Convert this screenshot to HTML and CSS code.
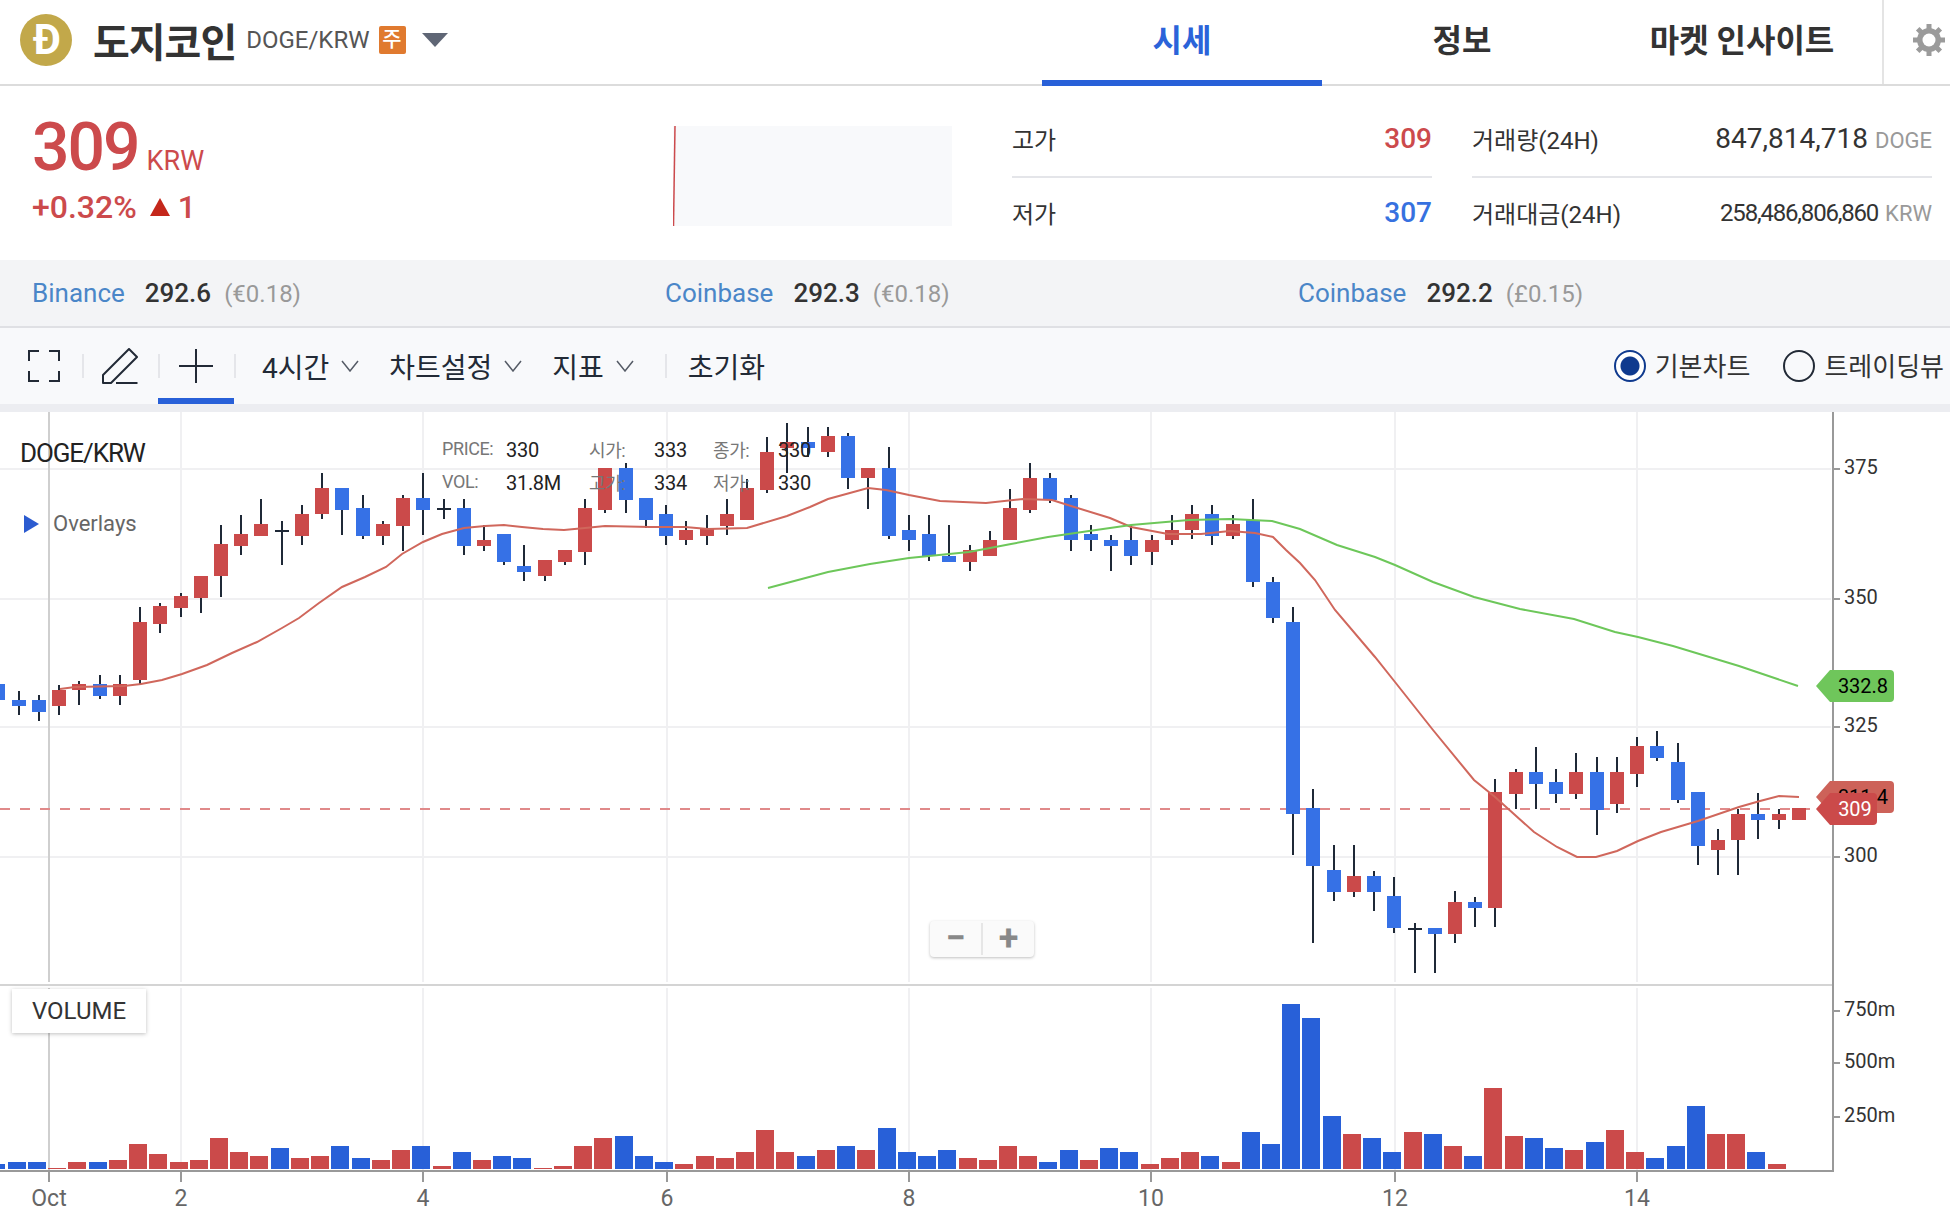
FILE: index.html
```html
<!DOCTYPE html>
<html lang="ko">
<head>
  <meta charset="UTF-8" />
  <title>도지코인 DOGE/KRW</title>
  <link rel="stylesheet" href="styles.css">
</head>
<body>

  <header class="top-bar">
    <div class="coin">
      <span class="coin-logo">Ð</span>
      <h1 class="coin-name">도지코인</h1>
      <span class="coin-pair">DOGE/KRW</span>
      <span class="coin-badge">주</span>
      <span class="coin-arrow"></span>
    </div>
    <nav class="tabs">
      <a class="tab active">시세</a>
      <a class="tab">정보</a>
      <a class="tab">마켓 인사이트</a>
    </nav>
    <div class="settings">
      <svg width="34" height="34" viewBox="0 0 34 34">
        <g stroke="#9b9b9b" stroke-width="5">
          <path d="M17 1V33M1 17H33M5.7 5.7L28.3 28.3M28.3 5.7L5.7 28.3"/>
        </g>
        <circle cx="17" cy="17" r="12" fill="#9b9b9b"/>
        <circle cx="17" cy="17" r="6.5" fill="#fff"/>
      </svg>
    </div>
  </header>

  <section class="summary">
    <div class="price-col">
      <div class="price-main"><span class="price-now">309</span><span class="price-unit">KRW</span></div>
      <div class="price-change">+0.32%<span class="up-arrow"></span>1</div>
    </div>
    <div class="spark">
      <svg width="279" height="100" viewBox="0 0 279 100"><path d="M0.5 100L2 0" stroke="#cc4a4c" stroke-width="1.5" fill="none"/></svg>
    </div>
    <div class="stats">
      <div class="stat divided"><span>고가</span><b class="red">309</b></div>
      <div class="stat divided"><span>거래량(24H)</span><em>847,814,718<small>DOGE</small></em></div>
      <div class="stat"><span>저가</span><b class="blue">307</b></div>
      <div class="stat"><span>거래대금(24H)</span><em class="tight">258,486,806,860<small>KRW</small></em></div>
    </div>
  </section>

  <section class="exchanges">
    <div class="exchange"><a>Binance</a><b>292.6</b><span>(€0.18)</span></div>
    <div class="exchange"><a>Coinbase</a><b>292.3</b><span>(€0.18)</span></div>
    <div class="exchange"><a>Coinbase</a><b>292.2</b><span>(£0.15)</span></div>
  </section>

  <section class="toolbar">
    <button class="tool tool-full">
      <svg width="32" height="32" viewBox="0 0 32 32" fill="none" stroke="#222a36" stroke-width="2"><path d="M1 11V1h10M21 1h10v10M31 21v10H21M11 31H1V21"/></svg>
    </button>
    <i class="sep"></i>
    <button class="tool tool-pen">
      <svg width="36" height="36" viewBox="0 0 36 36" fill="none" stroke="#222a36" stroke-width="2" stroke-linejoin="round"><path d="M1 35V27L27 1l8 8-26 26H1zM14 35H35.5"/></svg>
    </button>
    <i class="sep"></i>
    <button class="tool tool-cross active">
      <svg width="34" height="34" viewBox="0 0 34 34" fill="none" stroke="#222a36" stroke-width="2"><path d="M17 0V34M0 17H34"/></svg>
    </button>
    <i class="sep"></i>
    <a class="menu first">4시간<svg width="18" height="12" viewBox="0 0 18 12" fill="none" stroke="#555b66" stroke-width="1.5"><path d="M1 1l8 10 8-10"/></svg></a>
    <a class="menu">차트설정<svg width="18" height="12" viewBox="0 0 18 12" fill="none" stroke="#555b66" stroke-width="1.5"><path d="M1 1l8 10 8-10"/></svg></a>
    <a class="menu">지표<svg width="18" height="12" viewBox="0 0 18 12" fill="none" stroke="#555b66" stroke-width="1.5"><path d="M1 1l8 10 8-10"/></svg></a>
    <i class="sep sep-menu"></i>
    <a class="menu reset">초기화</a>
    <div class="chart-type">
      <label class="radio checked"><i></i><span>기본차트</span></label>
      <label class="radio"><i></i><span>트레이딩뷰</span></label>
    </div>
  </section>

  <section class="chart" id="chart">
    <div class="chart-title">DOGE/KRW</div>
    <div class="overlays"><i></i>Overlays</div>
    <div class="legend">
      <span>PRICE:</span><b>330</b><span>시가:</span><b>333</b><span>종가:</span><b>330</b>
      <span>VOL:</span><b>31.8M</b><span>고가:</span><b>334</b><span>저가:</span><b>330</b>
    </div>
    <div class="zoom-box"><a class="zoom-btn">−</a><a class="zoom-btn">+</a></div>
    <div class="volume-badge">VOLUME</div>
  </section>

  <script src="chart.js"></script>

</body>
</html>
```

FILE: styles.css
```css
* {
  box-sizing: border-box;
}

body {
  margin: 0;
  width: 1950px;
  height: 1224px;
  overflow: hidden;
  background: #fff;
  color: #222;
  font-family: Roboto, "Noto Sans CJK KR", sans-serif;
}

/* top bar */
.top-bar {
  display: flex;
  height: 86px;
  border-bottom: 2px solid #dcdcdc;
}

.coin {
  display: flex;
  align-items: center;
  padding: 0 0 4px 20px;
}

.coin-logo {
  width: 52px;
  height: 52px;
  padding-left: 2px;
  border-radius: 50%;
  background: #c2a84a;
  color: #fff;
  font-size: 42px;
  font-weight: 700;
  line-height: 52px;
  text-align: center;
}

.coin-name {
  margin: 0 0 0 21px;
  font-size: 40px;
  font-weight: 700;
  letter-spacing: -1px;
  color: #333;
}

.coin-pair {
  margin-left: 10px;
  font-size: 24px;
  color: #555;
}

.coin-badge {
  width: 27px;
  height: 28px;
  margin-left: 9px;
  border-radius: 2px;
  background: #e07a2f;
  color: #fff;
  font-size: 21px;
  font-weight: 500;
  line-height: 27px;
  text-align: center;
}

.coin-arrow {
  margin-left: 16px;
  border-left: 13px solid transparent;
  border-right: 13px solid transparent;
  border-top: 14px solid #5f6675;
}

.tabs {
  display: flex;
  margin-left: auto;
}

.tab {
  width: 280px;
  height: 86px;
  font-size: 32px;
  font-weight: 700;
  line-height: 82px;
  text-align: center;
  color: #333;
}

.tab.active {
  color: #2b63d9;
  border-bottom: 6px solid #2860d8;
}

.settings {
  display: flex;
  align-items: center;
  justify-content: flex-end;
  width: 68px;
  padding: 0 4px 5px 0;
  border-left: 2px solid #e4e4e4;
}

/* price summary */
.summary {
  display: flex;
  height: 174px;
  padding-left: 32px;
}

.price-col {
  width: 641px;
  padding-top: 30px;
  color: #cc4a4c;
}

.price-main {
  height: 64px;
  line-height: 64px;
}

.price-now {
  font-size: 66px;
  font-weight: 500;
  letter-spacing: -2px;
}

.price-unit {
  margin-left: 8px;
  font-size: 27px;
}

.price-change {
  display: flex;
  align-items: center;
  height: 30px;
  margin-top: 12px;
  font-size: 32px;
  font-weight: 500;
}

.up-arrow {
  margin: 0 8px 0 13px;
  border-left: 10px solid transparent;
  border-right: 10px solid transparent;
  border-bottom: 18px solid #c4271b;
}

.spark {
  width: 279px;
  height: 100px;
  margin-top: 40px;
  background: #f8f9fb;
}

.spark svg {
  display: block;
}

.stats {
  display: grid;
  grid-template-columns: 420px 460px;
  grid-template-rows: 76px 72px;
  column-gap: 40px;
  margin: 16px 0 0 60px;
}

.stat {
  display: flex;
  align-items: center;
  justify-content: space-between;
  padding-bottom: 3px;
  font-size: 24px;
  color: #333;
}

.stat.divided {
  border-bottom: 2px solid #e4e5e9;
  padding-bottom: 2px;
}

.stat b {
  font-size: 28px;
  font-weight: 500;
}

.stat em {
  font-style: normal;
  font-size: 28px;
}

.stat em.tight {
  font-size: 24px;
  letter-spacing: -1.2px;
}

.stat small {
  margin-left: 7px;
  font-size: 22px;
  letter-spacing: 0;
  color: #999;
}

.red { color: #cc4a4c; }
.blue { color: #3671e0; }

/* other exchanges */
.exchanges {
  display: grid;
  grid-template-columns: repeat(3, 633px);
  align-items: center;
  height: 68px;
  padding-left: 32px;
  background: #f3f4f6;
  border-bottom: 2px solid #dfe0e4;
}

.exchange {
  font-size: 26px;
}

.exchange a {
  color: #4a86c8;
}

.exchange b {
  margin-left: 20px;
  font-weight: 500;
  color: #333;
}

.exchange span {
  margin-left: 13px;
  font-size: 24px;
  color: #999;
}

/* toolbar */
.toolbar {
  display: flex;
  align-items: center;
  height: 84px;
  background: #f8f9fb;
  border-bottom: 8px solid #ecedf1;
}

.tool {
  display: flex;
  align-items: center;
  justify-content: center;
  height: 76px;
  padding: 0;
  background: none;
  border: 0;
}

.tool-full { width: 82px; padding-left: 6px; }
.tool-pen { width: 74px; padding-right: 3px; }

.tool-cross {
  width: 76px;
  margin: 0 0 0 -2px;
}

.tool-cross.active {
  border-bottom: 6px solid #2860d8;
  padding-top: 6px;
}

.sep {
  width: 2px;
  height: 24px;
  background: #e5e6ea;
}

.menu {
  display: flex;
  align-items: center;
  gap: 12px;
  margin-right: 30px;
  font-size: 28px;
  color: #222a36;
}

.menu.first {
  margin-left: 26px;
}

.sep-menu {
  margin-left: 1px;
}

.menu.reset {
  margin-left: 21px;
}

.chart-type {
  display: flex;
  gap: 33px;
  margin-left: auto;
  padding-right: 6px;
}

.radio {
  display: flex;
  align-items: center;
  gap: 9px;
  font-size: 26px;
  color: #333;
}

.radio span {
  margin-bottom: 4px;
}

.radio i {
  width: 32px;
  height: 32px;
  border-radius: 50%;
  border: 2px solid #222a36;
}

.radio.checked i {
  border-color: #0f3a8e;
  background: radial-gradient(circle, #0f3a8e 0 9px, #fff 10px);
}

/* chart */
.chart {
  position: relative;
  height: 812px;
}

.chart svg {
  display: block;
}

.chart-title,
.overlays,
.legend,
.zoom-box,
.volume-badge {
  position: absolute;
}

.chart-title {
  left: 20px;
  top: 23px;
  font-size: 26px;
  line-height: 36px;
  letter-spacing: -1.1px;
  color: #222;
}

.overlays {
  display: flex;
  align-items: center;
  gap: 14px;
  left: 24px;
  top: 97px;
  font-size: 22px;
  line-height: 30px;
  color: #666;
}

.overlays i {
  border-top: 9px solid transparent;
  border-bottom: 9px solid transparent;
  border-left: 15px solid #2b5bd0;
}

.legend {
  display: grid;
  grid-template-columns: 64px 83px 65px 59px 65px auto;
  grid-auto-rows: 33px;
  align-items: center;
  left: 442px;
  top: 21px;
  font-size: 18px;
  color: #777;
}

.legend span {
  padding-bottom: 2px;
  letter-spacing: -0.4px;
}

.legend b {
  font-size: 20px;
  font-weight: 400;
  letter-spacing: -0.3px;
  color: #222;
}

.zoom-box {
  display: flex;
  left: 930px;
  top: 509px;
  width: 104px;
  height: 36px;
  background: #fafafa;
  border-radius: 4px;
  box-shadow: 0 1px 3px rgba(0, 0, 0, 0.25);
}

.zoom-btn {
  flex: 1;
  font-size: 36px;
  font-weight: 700;
  line-height: 34px;
  text-align: center;
  color: #888;
}

.zoom-btn + .zoom-btn {
  border-left: 2px solid #e6e6e6;
  margin: 2px 0;
  line-height: 30px;
}

.volume-badge {
  left: 12px;
  top: 577px;
  width: 134px;
  height: 44px;
  background: #fff;
  box-shadow: 0 1px 4px rgba(0, 0, 0, 0.25);
  font-size: 24px;
  line-height: 44px;
  text-align: center;
  color: #333;
}

.grid-line { stroke: #f0f0f2; stroke-width: 2; }
.grid-oct { stroke: #cfcfcf; stroke-width: 2; }
.axis-line { stroke: #999; stroke-width: 2; }
.pane-line { stroke: #d4d4d4; stroke-width: 2; }
.last-line { stroke: #e08a8a; stroke-width: 2; stroke-dasharray: 10 10; }
.wick { stroke: #1f2937; stroke-width: 2; }
.ma-red { fill: none; stroke: #d0675c; stroke-width: 2; }
.ma-green { fill: none; stroke: #6dc75a; stroke-width: 2; }
.axis-text { font-size: 20px; fill: #333; }
.date-text { font-size: 23px; fill: #666; text-anchor: middle; }
.tag-text { font-size: 20px; text-anchor: middle; }
```

FILE: chart.js
```js
// pixel data read in page coordinates: [colour, wickTop, bodyTop, bodyBottom, wickBottom]
const candles = [
  ['b', 684, 684, 700, 700], ['b', 691, 700, 706, 715], ['b', 695, 700, 712, 721], ['r', 685, 690, 706, 715],
  ['r', 681, 684, 690, 705], ['b', 675, 684, 696, 699], ['r', 675, 684, 696, 705], ['r', 607, 622, 680, 684],
  ['r', 603, 606, 624, 633], ['r', 593, 596, 608, 617], ['r', 576, 576, 598, 613], ['r', 525, 544, 576, 597],
  ['r', 515, 534, 546, 555], ['r', 499, 524, 536, 536], ['d', 521, 530, 532, 565], ['r', 505, 514, 536, 545],
  ['r', 473, 488, 514, 519], ['b', 488, 488, 510, 535], ['b', 495, 508, 536, 539], ['r', 521, 524, 536, 545],
  ['r', 495, 498, 526, 551], ['b', 473, 498, 510, 535], ['d', 499, 508, 510, 519], ['b', 499, 508, 546, 555],
  ['r', 525, 540, 546, 551], ['b', 534, 534, 562, 565], ['b', 545, 566, 572, 581], ['r', 560, 560, 576, 581],
  ['r', 550, 550, 562, 565], ['r', 499, 508, 552, 565], ['r', 468, 468, 510, 513], ['b', 463, 468, 500, 513],
  ['b', 498, 498, 520, 528], ['b', 505, 514, 536, 545], ['r', 521, 530, 540, 545], ['r', 515, 528, 536, 545],
  ['r', 499, 514, 526, 535], ['r', 479, 488, 520, 520], ['r', 437, 452, 490, 493], ['r', 423, 442, 448, 473],
  ['b', 427, 442, 448, 457], ['r', 427, 436, 452, 457], ['b', 433, 436, 478, 489], ['r', 468, 468, 478, 509],
  ['b', 447, 468, 536, 539], ['b', 515, 530, 540, 551], ['b', 515, 534, 556, 561], ['b', 525, 556, 562, 562],
  ['r', 545, 550, 562, 571], ['r', 531, 540, 556, 556], ['r', 489, 508, 540, 540], ['r', 463, 478, 510, 513],
  ['b', 473, 478, 500, 503], ['b', 495, 498, 540, 551], ['b', 525, 534, 540, 551], ['b', 535, 540, 546, 571],
  ['b', 525, 540, 556, 565], ['r', 535, 540, 552, 565], ['r', 515, 530, 540, 545], ['r', 505, 514, 530, 539],
  ['b', 505, 514, 536, 545], ['r', 515, 524, 536, 539], ['b', 499, 520, 582, 587], ['b', 577, 582, 618, 623],
  ['b', 607, 622, 814, 855], ['b', 789, 808, 866, 943], ['b', 845, 870, 892, 901], ['r', 845, 876, 892, 897],
  ['b', 871, 876, 892, 911], ['b', 877, 896, 928, 933], ['d', 923, 928, 930, 973], ['b', 928, 928, 934, 973],
  ['r', 891, 902, 934, 943], ['b', 897, 902, 908, 927], ['r', 779, 792, 908, 927], ['r', 769, 772, 794, 809],
  ['b', 747, 772, 784, 809], ['b', 769, 782, 794, 803], ['r', 753, 772, 794, 799], ['b', 757, 772, 810, 835],
  ['r', 757, 772, 804, 813], ['r', 737, 746, 774, 787], ['b', 731, 746, 758, 761], ['b', 743, 762, 800, 803],
  ['b', 792, 792, 846, 865], ['r', 829, 840, 850, 875], ['r', 809, 814, 840, 875], ['b', 793, 814, 820, 839],
  ['r', 809, 814, 820, 829], ['r', 808, 808, 820, 820]
];

// volume bars: [colour, height in px], same index as candles
const volumes = [
  ['b', 5], ['b', 7], ['b', 7], ['r', 1], ['r', 7], ['b', 7], ['r', 9], ['r', 25], ['r', 15], ['r', 7], ['r', 9],
  ['r', 31], ['r', 17], ['r', 13], ['b', 21], ['r', 11], ['r', 13], ['b', 23], ['b', 11], ['r', 9], ['r', 19],
  ['b', 23], ['r', 3], ['b', 17], ['r', 9], ['b', 13], ['b', 11], ['r', 1], ['r', 3], ['r', 23], ['r', 31],
  ['b', 33], ['b', 13], ['b', 7], ['r', 5], ['r', 13], ['r', 11], ['r', 17], ['r', 39], ['r', 17], ['b', 13],
  ['r', 19], ['b', 23], ['r', 19], ['b', 41], ['b', 17], ['b', 13], ['b', 19], ['r', 11], ['r', 9], ['r', 23],
  ['r', 13], ['b', 7], ['b', 19], ['r', 9], ['b', 21], ['b', 17], ['r', 5], ['r', 11], ['r', 17], ['b', 13],
  ['r', 7], ['b', 37], ['b', 25], ['b', 165], ['b', 151], ['b', 53], ['r', 35], ['b', 31], ['b', 17], ['r', 37],
  ['b', 35], ['r', 23], ['b', 13], ['r', 81], ['r', 33], ['b', 31], ['b', 21], ['r', 19], ['b', 27], ['r', 39],
  ['r', 17], ['b', 11], ['b', 23], ['b', 63], ['r', 35], ['r', 35], ['b', 17], ['r', 5]
];

const redLine = [
  [60,689],[75,687],[124,686],[141,684],[162,680],[182,674],[207,665],[232,653],[257,642],[282,628],[299,618],
  [319,603],[342,587],[365,577],[386,567],[402,554],[423,542],[442,534],[464,528],[485,526],[504,525],[522,527],
  [543,529],[564,530],[585,528],[605,526],[650,527],[685,527],[708,529],[747,528],[787,516],[810,507],[828,499],
  [868,488],[886,490],[909,495],[940,501],[986,503],[1023,499],[1052,500],[1071,506],[1110,518],[1131,527],
  [1168,534],[1201,534],[1230,531],[1255,533],[1273,537],[1286,550],[1300,563],[1315,580],[1335,610],[1375,657],
  [1395,682],[1433,730],[1474,780],[1495,797],[1534,832],[1557,847],[1577,857],[1596,857],[1617,851],[1638,841],
  [1661,832],[1698,821],[1739,807],[1760,801],[1779,796],[1799,797]
];

const greenLine = [
  [768,588],[828,572],[870,564],[909,558],[969,552],[1011,544],[1048,537],[1089,531],[1131,525],[1189,520],
  [1230,519],[1272,521],[1300,529],[1337,545],[1375,557],[1395,565],[1433,582],[1474,597],[1520,609],[1574,619],
  [1615,632],[1638,637],[1673,646],[1739,666],[1798,686]
];

const gridX = [181, 423, 667, 909, 1151, 1395, 1637];
const gridY = [469, 599, 727, 857];
const dateLabels = [[49, 'Oct'], [181, '2'], [423, '4'], [667, '6'], [909, '8'], [1151, '10'], [1395, '12'], [1637, '14']];
const priceLabels = [[469, '375'], [599, '350'], [727, '325'], [857, '300']];
const volumeLabels = [[1011, '750m'], [1063, '500m'], [1117, '250m']];

const candleFill = { r: '#cb4a4a', b: '#3671e6', d: '#1f2937' };
const volumeFill = { r: '#cb4a4a', b: '#2860d8' };
const AXIS_X = 1833;
const VOL_BASE = 1169;

const NS = 'http://www.w3.org/2000/svg';
const svg = document.createElementNS(NS, 'svg');
svg.setAttribute('width', 1950);
svg.setAttribute('height', 812);
// the chart section starts 412px down the page
svg.setAttribute('viewBox', '0 412 1950 812');

function add(tag, attrs, text) {
  const el = document.createElementNS(NS, tag);
  Object.keys(attrs).forEach(k => el.setAttribute(k, attrs[k]));
  if (text) el.textContent = text;
  svg.appendChild(el);
  return el;
}

function line(x1, y1, x2, y2, cls) {
  return add('line', { x1, y1, x2, y2, class: cls, 'shape-rendering': 'crispEdges' });
}

function rect(x, y, width, height, fill) {
  return add('rect', { x, y, width, height, fill, 'shape-rendering': 'crispEdges' });
}

function candleX(i) {
  return Math.round(-1.53 + 20.23 * i);
}

// grid
gridY.forEach(y => line(0, y, 1831, y, 'grid-line'));
gridX.forEach(x => line(x, 412, x, 1170, 'grid-line'));
line(49, 412, 49, 1170, 'grid-oct');

// pane split with a small white gap over the vertical lines
rect(0, 982, AXIS_X, 6, '#fff');
line(0, 985, AXIS_X, 985, 'pane-line');

// volume
volumes.forEach((v, i) => {
  rect(candleX(i) - 11, VOL_BASE - v[1], 18, v[1], volumeFill[v[0]]);
});

// axes
line(0, 1171, AXIS_X + 1, 1171, 'axis-line');
line(AXIS_X, 412, AXIS_X, 1172, 'axis-line');
dateLabels.forEach(d => {
  line(d[0], 1172, d[0], 1182, 'axis-line');
  add('text', { x: d[0], y: 1206, class: 'date-text' }, d[1]);
});
priceLabels.concat(volumeLabels).forEach(p => {
  line(AXIS_X, p[0], AXIS_X + 7, p[0], 'axis-line');
  add('text', { x: 1844, y: p[0] + 5, class: 'axis-text' }, p[1]);
});

line(0, 809, 1820, 809, 'last-line');

// candles
candles.forEach((c, i) => {
  const x = candleX(i);
  if (c[4] > c[1]) line(x, c[1], x, c[4], 'wick');
  rect(x - 7, c[2], 14, c[3] - c[2], candleFill[c[0]]);
});

// moving averages
add('polyline', { points: redLine.join(' '), class: 'ma-red' });
add('polyline', { points: greenLine.join(' '), class: 'ma-green' });

// value tags on the axis
add('path', { d: 'M1816 686L1830 670H1890q4 0 4 4V698q0 4-4 4H1830Z', fill: '#6fc65b' });
add('text', { x: 1863, y: 693, class: 'tag-text', fill: '#000' }, '332.8');
add('path', { d: 'M1816 797L1830 781H1890q4 0 4 4V809q0 4-4 4H1830Z', fill: '#cd6259' });
add('text', { x: 1863, y: 804, class: 'tag-text', fill: '#000' }, '311.4');
add('path', { d: 'M1816 809L1830 793H1873q4 0 4 4V821q0 4-4 4H1830Z', fill: '#cb4a4a' });
add('text', { x: 1855, y: 816, class: 'tag-text', fill: '#fff' }, '309');

document.getElementById('chart').prepend(svg);
```
